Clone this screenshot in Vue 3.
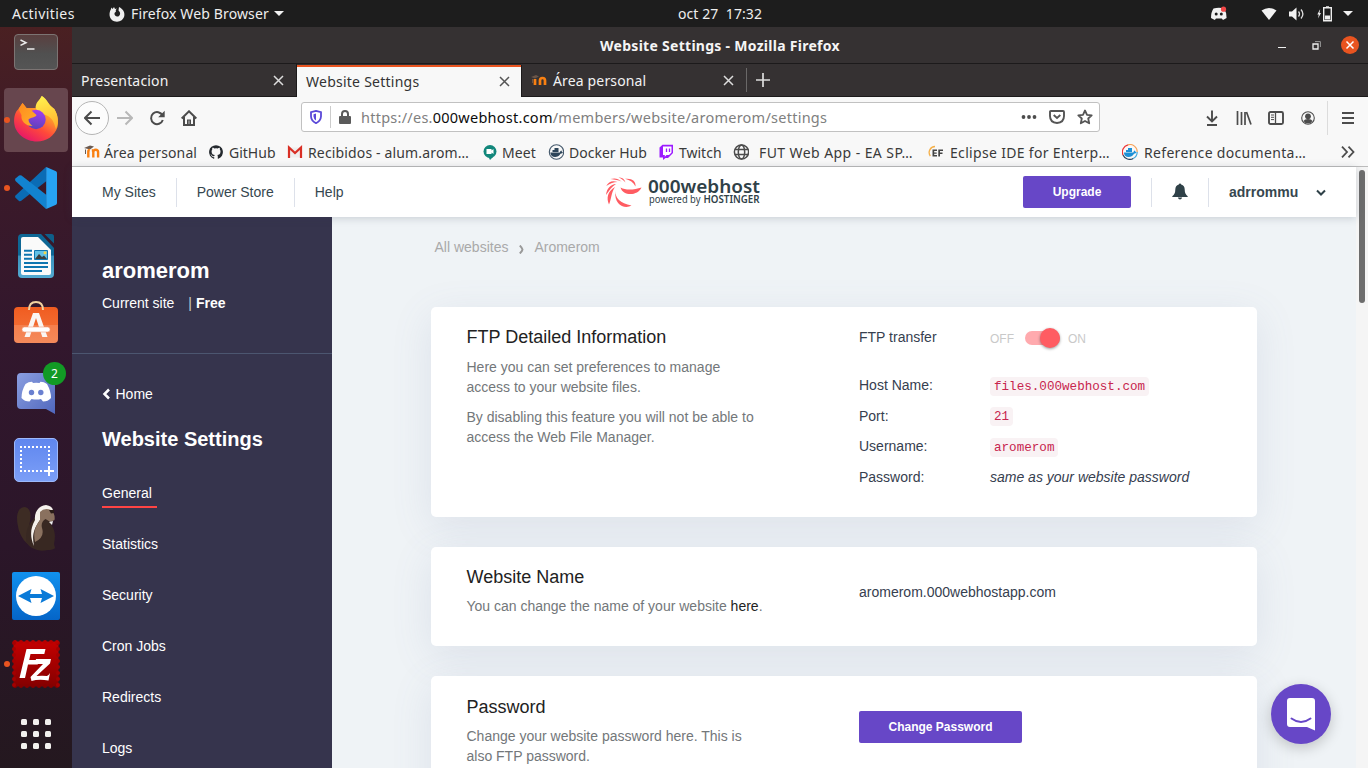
<script setup>
const bookmarks = [
  { id: 'moodle', label: 'Área personal', w: 124, gap: 4, ls: 0.13 },
  { id: 'github', label: 'GitHub', w: 79, gap: 5, ls: 0 },
  { id: 'gmail', label: 'Recibidos - alum.arom…', w: 195, gap: 5, ls: 0.15 },
  { id: 'meet', label: 'Meet', w: 66, gap: 4, ls: 0.1 },
  { id: 'docker', label: 'Docker Hub', w: 110, gap: 5, ls: 0 },
  { id: 'twitch', label: 'Twitch', w: 75, gap: 5, ls: 0 },
  { id: 'globe', label: 'FUT Web App - EA SP…', w: 195, gap: 10, ls: 0.42 },
  { id: 'ef', label: 'Eclipse IDE for Enterp…', w: 194, gap: 6, ls: 0.32 },
  { id: 'dockerc', label: 'Reference documenta…', w: 200, gap: 6, ls: 0.32 },
]
const menu = ['General', 'Statistics', 'Security', 'Cron Jobs', 'Redirects', 'Logs']
const dots = [0, 12, 24]
const stamp = [3, 9, 15, 21, 27, 33, 39, 45]
</script>

<template>
  <div class="desktop">
    <header class="topbar">
      <span class="activities">Activities</span>
      <svg class="tb-fox" width="16" height="16" viewBox="0 0 16 16"><path d="M5 1l1 2 2-.4C6.800 3.500 6.500 4.500 7 5.500L5.500 7C5 10 8 11.500 10 10c2-2 1-4-.5-5.500L10 1c4 2 6 5 5.300 9C14.500 13.500 11.500 15.700 8 15.700 4 15.700 1 13 .6 9.500.3 7 1 5 1.700 3.700L2.500 1.500 3.600 3z" fill="#eee" /></svg>
      <span class="app-name">Firefox Web Browser</span>
      <i class="caret"></i>
      <span class="clock">oct 27&nbsp; 17:32</span>
      <div class="tray">
        <svg class="t-disc" width="18" height="15" viewBox="0 0 18 15"><path d="M3.500 2.500Q9 .8 14 2.500 17 7 16.600 12L13 14l-1.200-1.500H6L4.800 14 1 12Q1 6 3.500 2.500z" fill="#f2f2f2" /><circle cx="6.200" cy="8" r="1.500" fill="#1d1d1d" /><circle cx="11.300" cy="8" r="1.500" fill="#1d1d1d" /><circle cx="13.500" cy="3.200" r="2.600" fill="#f04747" /></svg>
        <svg class="t-wifi" width="16" height="14" viewBox="0 0 16 14"><path d="M.5 3.500Q8-1.500 15.500 3.500L8 13z" fill="#f2f2f2" /></svg>
        <svg class="t-vol" width="16" height="14" viewBox="0 0 16 14"><path d="M0 4.500h3L7.500.5v13L3 9.500H0z" fill="#f2f2f2" /><path d="M9.500 4.500q2 2.500 0 5M12 2.500q3.800 4.500 0 9" fill="none" stroke="#ddd" stroke-width="1.300" /></svg>
        <svg class="t-bat" width="15" height="16" viewBox="0 0 15 16"><path d="M3.200 3L.3 8.500h1.500L1 12.500 4 7H2.500z" fill="#eee" /><path d="M6.700 1.700h7.600v13H6.700z" fill="none" stroke="#eee" stroke-width="1.400" /><path d="M9 .2h3v1.500H9zM8 9.500h5v4H8z" fill="#eee" /></svg>
        <i class="caret"></i>
      </div>
    </header>

    <div class="workspace">
      <aside class="dock">
        <div class="cell">
          <svg width="48" height="48" viewBox="0 0 48 48"><defs><linearGradient id="gt" x1="0" y1="0" x2="0" y2="1"><stop offset="0" stop-color="#5a3f3f" /><stop offset=".55" stop-color="#505050" /><stop offset="1" stop-color="#555" /></linearGradient></defs><rect x="2.500" y="6.500" width="43" height="35" rx="3.500" fill="url(#gt)" stroke="#7c7473" /><path d="M8.500 12l5.500 2.700-5.500 2.700" stroke="#eee" stroke-width="1.500" fill="none" /><path d="M15 21h7.500" stroke="#eee" stroke-width="1.500" /></svg>
        </div>
        <div class="cell">
          <i class="run-dot"></i>
          <div class="lit">
            <svg width="48" height="48" viewBox="0 0 48 48">
              <defs>
                <linearGradient id="f1" x1=".85" y1="0" x2=".25" y2="1"><stop offset="0" stop-color="#fff44f" /><stop offset=".35" stop-color="#ffa12a" /><stop offset=".65" stop-color="#ff4a3a" /><stop offset="1" stop-color="#e4126d" /></linearGradient>
                <linearGradient id="f2" x1=".6" y1="0" x2=".4" y2="1"><stop offset="0" stop-color="#a23cf0" /><stop offset="1" stop-color="#5a43b8" /></linearGradient>
                <linearGradient id="f3" x1="0" y1="0" x2="1" y2="1"><stop offset="0" stop-color="#ff8a1e" /><stop offset="1" stop-color="#ffb02a" /></linearGradient>
                <linearGradient id="f4" x1=".4" y1="0" x2=".6" y2="1"><stop offset="0" stop-color="#fff14d" /><stop offset="1" stop-color="#ffb02e" /></linearGradient>
              </defs>
              <path d="M6.500 13l4-6 4 5h9l6-12c6 4 7 9 10 11l3 2c3 7 4.500 12 3 18-3 9-11 14.500-20.500 14.500C13 45.500 3 37 2.200 27 1.800 21 3 16 6.500 13z" fill="url(#f1)" />
              <path d="M30 0c6 4 6 8 10 11 6 5 7.500 14 4 22-2-5-2-9-8-13-8-3-14-6-12-11 1-4 4-5 6-9z" fill="url(#f4)" />
              <circle cx="24" cy="23.500" r="9.700" fill="url(#f2)" />
              <path d="M6.500 13l4-6 4 5c3 0 5 1 6 3.500l4 3.500c-1 3-6 2-8 4.500 0 3 2 5 4 6.500-7 0-12-5-11-11z" fill="url(#f3)" />
            </svg>
          </div>
        </div>
        <div class="cell">
          <i class="run-dot"></i>
          <svg width="48" height="48" viewBox="0 0 48 48"><path d="M34 3L3.500 31.500q-1 1.300 0 2.300L7 37q1.200.6 2.300-.2L34.500 17z" fill="#0b6cb5" /><path d="M34 45L3.500 17q-1-1.200 0-2.400L7 11.500q1.300-.7 2.500 0L34.500 31z" fill="#1283d0" /><path d="M34.200 3L44 7.300q1 .6 1 2v29.500q0 1.300-1 1.900L34.200 45z" fill="#27a3f3" /></svg>
        </div>
        <div class="cell">
          <svg width="48" height="48" viewBox="0 0 48 48"><defs><linearGradient id="w1" x1="0" y1="0" x2="0" y2="1"><stop offset=".48" stop-color="#0e6795" /><stop offset=".5" stop-color="#3a92bd" /><stop offset="1" stop-color="#53aad1" /></linearGradient></defs><path d="M10 2h19l13 14v26q0 4-4 4H10q-4 0-4-4V6q0-4 4-4z" fill="url(#w1)" /><path d="M32.500 2h7q2.500 0 2.500 2.500v7z" fill="#0e5f8a" /><path d="M11 5h15l13 13v23q0 2-2 2H11q-2 0-2-2V7q0-2 2-2z" fill="#fafafa" /><path d="M12 18.800h8M12 22.800h8M12 26.800h8M12 31h24M12 35h24M12 39h18" stroke="#0f76b0" stroke-width="2" /><path d="M22.500 18.500h13v9h-13z" fill="#62c1e6" stroke="#0f76b0" stroke-width="1" /><path d="M23 27l4-5 3 3 2-1.500 3 3.500z" fill="#3b3f3f" /><circle cx="33" cy="20.700" r="1.500" fill="#f2d64b" /></svg>
        </div>
        <div class="cell">
          <svg width="48" height="48" viewBox="0 0 48 48"><defs><linearGradient id="s1" x1="0" y1="0" x2="0" y2="1"><stop offset="0" stop-color="#f05c20" /><stop offset=".5" stop-color="#f26a30" /><stop offset=".51" stop-color="#f57f4c" /><stop offset="1" stop-color="#f48a5b" /></linearGradient></defs><rect x="2" y="7" width="44" height="36" rx="4" fill="url(#s1)" /><path d="M17 10Q17 2 24 2t7 8" fill="none" stroke="#f2d2a0" stroke-width="2" /><path d="M21 13h6l8.500 24h-5.200L24 18l-6.300 19h-5.200z" fill="#faf5f2" /><rect x="10" y="27" width="28" height="5" rx="2.500" fill="#fff" stroke="#f0a07c" stroke-width=".6" /></svg>
        </div>
        <div class="cell">
          <svg width="48" height="48" viewBox="0 0 48 48"><defs><linearGradient id="d1" x1="0" y1="0" x2="1" y2="1"><stop offset="0" stop-color="#8a9ee0" /><stop offset="1" stop-color="#5067bd" /></linearGradient></defs><path d="M9 5h30q4 0 4 4v37l-9-5H9q-4 0-4-4V9q0-4 4-4z" fill="url(#d1)" /><path d="M13.500 16q3-2.300 6.500-2.300l1 1.300q3.500-.4 6.500 0l1-1.300q3.500 0 6.500 2.300 4 7 4 14-3 3.500-8 3.500L29 31q-4.500 1-9.500 0L17.500 33.500q-5 0-8-3.500 0-7.500 4-14z" fill="#fff" /><circle cx="19.500" cy="24.500" r="2.700" fill="#6a80d0" /><circle cx="28.800" cy="24.500" r="2.700" fill="#6a80d0" /></svg>
          <span class="count">2</span>
        </div>
        <div class="cell">
          <svg width="48" height="48" viewBox="0 0 48 48"><defs><linearGradient id="c1" x1="0" y1="0" x2="0" y2="1"><stop offset="0" stop-color="#5f86ef" /><stop offset="1" stop-color="#7c9ff7" /></linearGradient></defs><rect x="2.500" y="2.500" width="43" height="43" rx="4.500" fill="url(#c1)" stroke="#9db9fb" /><path d="M8 11h30M8 35h24M9 10v26M37 10v18" stroke="#fff" stroke-width="2" stroke-dasharray="2 2" fill="none" /><path d="M37 30v10M32 35h10" stroke="#fff" stroke-width="2" /></svg>
        </div>
        <div class="cell">
          <svg width="48" height="48" viewBox="0 0 48 48"><path d="M17 41C9 36 5 24 5 13q1-10 8-10 5 1 5.500 8c0 7-2 10-1 17z" fill="#3d2c24" /><path d="M28 9l12-2c0 7-3 11 0 15 4 6 3 13 2 18l1 4q-2 2-7 2-15 3-22-8c0-12 1-18 14-29z" fill="#382822" /><path d="M22 42c-4-9-4-17 1-26-1-8 4-14.500 11-15q7 1 7 6l-6 0q-6 1-7 9c-7 10-8 16-6 26z" fill="#f5f1ec" /><path d="M28 8q4-4.500 11-2 4.500 4 3.500 10l-4 2-5-3q-5 3-3.500 9 3 9-7 14c-2-10 0-15 5-22z" fill="#8a715f" /><path d="M37 6h5v3l-3 .5z" fill="#2a1d18" /><path d="M37 18l4-1-1 4z" fill="#eee" /></svg>
        </div>
        <div class="cell">
          <svg width="48" height="48" viewBox="0 0 48 48"><defs><linearGradient id="v1" x1="0" y1="0" x2="0" y2="1"><stop offset="0" stop-color="#1191ee" /><stop offset="1" stop-color="#0565c8" /></linearGradient></defs><rect width="48" height="48" rx="2" fill="url(#v1)" /><circle cx="24" cy="24" r="20" fill="#fff" /><path d="M6 24l13.500-7-1.500 5h12l-1.500-5L42 24l-13.500 7 1.500-5H18l1.500 5z" fill="#0a7ad8" /></svg>
        </div>
        <div class="cell">
          <i class="run-dot"></i>
          <svg width="48" height="48" viewBox="0 0 48 48"><defs><linearGradient id="z1" x1="0" y1="0" x2="0" y2="1"><stop offset="0" stop-color="#c40000" /><stop offset="1" stop-color="#850000" /></linearGradient></defs><rect x="1.500" y="1.500" width="45" height="45" fill="url(#z1)" /><template v-for="p in stamp" :key="p"><circle :cx="p" cy="2" r="2" fill="#b90000" /><circle :cx="p" cy="46" r="2" fill="#850000" /><circle cx="2" :cy="p" r="2" fill="#a50000" /><circle cx="46" :cy="p" r="2" fill="#a50000" /></template><path d="M14.500 9h19l-1.200 5H18.500l-1.300 6h9.500l-1 4.500H16L13 38H7.500z" fill="#fff" /><path d="M24 19h15l-1 4.500L24.500 36q6-.5 10.500 0 2-1 3-3l-1.500 7.500q-10-1.500-17 .5l-1-4L31 24h-8z" fill="#fff" /></svg>
        </div>
        <div class="cell apps">
          <svg width="30" height="30" viewBox="0 0 30 30"><template v-for="y in dots" :key="y"><rect v-for="x in dots" :key="x" :x="x" :y="y" width="6" height="6" rx="1.500" fill="#f2f0ee" /></template></svg>
        </div>
      </aside>

      <section class="window">
        <div class="titlebar">
          <span class="title">Website Settings - Mozilla Firefox</span>
          <div class="wbtns">
            <i class="min"></i>
            <svg width="9" height="9" viewBox="0 0 9 9"><path d="M1 3h5v5H1z" fill="none" stroke="#eee" stroke-width="1.300" /><path d="M3 .6h5.400V6" fill="none" stroke="#999" stroke-width="1" /></svg>
            <svg width="18" height="18" viewBox="0 0 18 18"><circle cx="9" cy="9" r="9" fill="#e95420" /><path d="M5.500 5.500l7 7M12.500 5.500l-7 7" stroke="#fff" stroke-width="1.500" /></svg>
          </div>
        </div>

        <div class="tabs">
          <div class="tab"><span class="t1">Presentacion</span><svg class="x" width="11" height="11" viewBox="0 0 11 11"><path d="M1 1l9 9M10 1l-9 9" stroke="#ddd" stroke-width="1.500" /></svg></div>
          <div class="tab active"><span class="t2">Website Settings</span><svg class="x" width="11" height="11" viewBox="0 0 11 11"><path d="M1 1l9 9M10 1l-9 9" stroke="#555" stroke-width="1.500" /></svg></div>
          <div class="tab third"><svg width="16" height="12" viewBox="0 0 16 12"><path d="M0 3l5-2 3 1.500-4 2zM1 5h1v4H1z" fill="#6b5548" /><path d="M4 11V5M9 11V6.500q0-2.500 2.500-2.500T14 6.500V11" fill="none" stroke="#f98012" stroke-width="2.700" /></svg><span class="t3">Área personal</span><svg class="x" width="11" height="11" viewBox="0 0 11 11"><path d="M1 1l9 9M10 1l-9 9" stroke="#ddd" stroke-width="1.500" /></svg></div>
          <svg class="plus" width="14" height="14" viewBox="0 0 14 14"><path d="M7 0v14M0 7h14" stroke="#ddd" stroke-width="1.700" /></svg>
        </div>

        <div class="navbar">
          <span class="back"><svg width="16" height="16" viewBox="0 0 16 16"><path d="M16 8H1.500M7.500 1.500L1 8l6.500 6.500" fill="none" stroke="#4c4c4c" stroke-width="2" /></svg></span>
          <svg class="fwd" width="16" height="16" viewBox="0 0 16 16"><path d="M0 8h14.500M8.500 1.500L15 8l-6.500 6.500" fill="none" stroke="#b8b8b8" stroke-width="2" /></svg>
          <svg class="reload" width="16" height="16" viewBox="0 0 16 16"><path d="M13.500 5.500A6 6 0 1 0 13.800 10" fill="none" stroke="#4c4c4c" stroke-width="2" /><path d="M15.700.8v6.500H9.200z" fill="#4c4c4c" /></svg>
          <svg class="home" width="16" height="16" viewBox="0 0 16 16"><path d="M.7 8.500L8 1.300l7.300 7.200M3 7v8h10V7" fill="none" stroke="#4c4c4c" stroke-width="2" /><path d="M6 9.500h4V15H6z" fill="#4c4c4c" /><path d="M8 10.500v3.500" stroke="#ddd" stroke-width=".8" /></svg>
          <div class="url">
            <svg width="12" height="14" viewBox="0 0 12 14"><path d="M6 .9L11 2.200V6.500Q10.700 11 6 13.200 1.300 11 1 6.500V2.200z" fill="none" stroke="#5a48d8" stroke-width="1.800" /><path d="M6 3.500v7Q3.500 9 3.500 6.300V4.200z" fill="#5a48d8" /></svg>
            <i class="usep"></i>
            <svg width="12" height="14" viewBox="0 0 12 14"><path d="M3 7V4q0-3 3-3t3 3v3" fill="none" stroke="#5a5a5a" stroke-width="2" /><rect y="6" width="12" height="8" rx="1" fill="#5a5a5a" /></svg>
            <span class="address">https://es.<b>000webhost.com</b>/members/website/aromerom/settings</span>
            <div class="uicons">
              <svg width="16" height="4" viewBox="0 0 16 4"><circle cx="2.500" cy="2" r="1.900" fill="#4c4c4c" /><circle cx="8" cy="2" r="1.900" fill="#4c4c4c" /><circle cx="13.500" cy="2" r="1.900" fill="#4c4c4c" /></svg>
              <svg width="16" height="14" viewBox="0 0 16 14"><path d="M1.900 1h12.200q.9 0 .9.900V6q0 6.500-7 7Q1 12.500 1 6V1.900Q1 1 1.900 1z" fill="none" stroke="#555" stroke-width="1.900" /><path d="M4.700 5L8 8l3.300-3" fill="none" stroke="#555" stroke-width="1.900" /></svg>
              <svg width="16" height="16" viewBox="0 0 16 16"><path d="M8 1.500l2 4.300 4.700.5-3.500 3.200 1 4.800L8 12l-4.200 2.300 1-4.800L1.300 6.300 6 5.800z" fill="none" stroke="#555" stroke-width="1.800" stroke-linejoin="round" /></svg>
            </div>
          </div>
          <div class="nright">
            <svg width="14" height="16" viewBox="0 0 14 16"><path d="M7 .5V11M2 6.500l5 5 5-5M2 15h10" fill="none" stroke="#4c4c4c" stroke-width="1.900" /></svg>
            <svg width="16" height="14" viewBox="0 0 16 14"><path d="M1.500 0v14M5.500 1v13M9 1v13M10.500 1l4.500 12.500" fill="none" stroke="#4c4c4c" stroke-width="1.700" /></svg>
            <svg width="16" height="14" viewBox="0 0 16 14"><rect x="1" y="1" width="14" height="12" rx="1.500" fill="none" stroke="#4c4c4c" stroke-width="1.900" /><path d="M7.500 1v12" stroke="#4c4c4c" stroke-width="1.300" /><path d="M3 4h3M3 6.300h3M3 8.600h3" stroke="#4c4c4c" stroke-width="1" /></svg>
            <svg width="14" height="14" viewBox="0 0 14 14"><circle cx="7" cy="7" r="6.300" fill="none" stroke="#4c4c4c" stroke-width="1.100" /><circle cx="7" cy="5.300" r="2.900" fill="#4c4c4c" /><path d="M2.500 10q1-2 4.500-2t4.500 2q-1.500 2.500-4.500 2.500T2.500 10z" fill="#4c4c4c" /></svg>
            <i class="nsep"></i>
            <svg width="12" height="12" viewBox="0 0 12 12"><path d="M0 1h12M0 6h12M0 11h12" stroke="#4c4c4c" stroke-width="1.900" /></svg>
          </div>
        </div>

        <div class="bookmarks">
          <div v-for="b in bookmarks" :key="b.id" class="bm" :style="{ width: b.w + 'px', gap: b.gap + 'px', letterSpacing: b.ls + 'px' }">
            <svg width="16" height="16" viewBox="0 0 16 16">
              <template v-if="b.id === 'moodle'"><path d="M0 4l6-2.500 4 1-4 3zM1 5.500h1v4.500H1z" fill="#6b5a50" /><path d="M4.300 13.500v-6q0-1.500 1.500-1.500M9.300 13.500V8q0-1.800-1.500-1.800M9.300 13.500V8q0-2.200 2.400-2.200T14.100 8v5.500" fill="none" stroke="#f98012" stroke-width="2.400" /></template>
              <path v-else-if="b.id === 'github'" d="M8 1.200a7 7 0 0 0-2.300 13.600c.4.100.5-.2.500-.4v-1.300c-2 .4-2.500-1-2.500-1-.4-.8-.8-1.100-.8-1.100-.7-.4 0-.4 0-.4.800 0 1.200.8 1.200.8.700 1.200 1.800.8 2.200.6.100-.5.300-.8.500-1-1.600-.2-3.200-.8-3.200-3.500 0-.8.300-1.400.7-1.900 0-.2-.3-.9.100-1.900 0 0 .6-.2 1.900.7a6.600 6.600 0 0 1 3.500 0c1.300-.9 1.900-.7 1.900-.7.400 1 .1 1.700.1 1.900.4.500.7 1.100.7 1.900 0 2.700-1.600 3.300-3.200 3.500.3.200.5.700.5 1.300v2.100c0 .2.100.4.500.4A7 7 0 0 0 8 1.200z" fill="#24292e" />
              <template v-else-if="b.id === 'gmail'"><path d="M2 3.500h12v10H2z" fill="#eee" /><path d="M2 14V3.500L8 9l6-5.500V14" fill="none" stroke="#d92f25" stroke-width="2.200" /></template>
              <template v-else-if="b.id === 'meet'"><circle cx="8" cy="7.500" r="6.500" fill="#12877b" /><path d="M6.500 13H11l-3 3z" fill="#12877b" /><path d="M4.500 5h5v1.500L11.500 5v5L9.500 8.500V10h-5z" fill="#fff" /></template>
              <template v-else-if="b.id === 'docker'"><circle cx="8.500" cy="8" r="7.200" fill="#f8f8f8" stroke="#44586b" stroke-width="1.100" /><path d="M2.300 8.500h9.500q.5-2 1.700-2 0 1.500 1.500 1.500-.5 1.500-2.500 1.700Q10.500 13 7 13 3 13 2.300 8.500zM4.500 6h6v2h-6zM6.500 4h4v2h-4z" fill="#2d4559" /></template>
              <template v-else-if="b.id === 'dockerc'"><path d="M1 11A7.500 7.500 0 0 1 6 .8" fill="none" stroke="#e33" stroke-width="1.200" /><path d="M6 .8A7.300 7.300 0 0 1 15.200 8" fill="none" stroke="#f6a35a" stroke-width="1.200" /><path d="M15.200 8a7.300 7.300 0 0 1-4 6.500" fill="none" stroke="#4ad" stroke-width="1.200" /><path d="M11.200 14.500A7.300 7.300 0 0 1 1 11" fill="none" stroke="#2b4560" stroke-width="1.200" /><path d="M1.800 8.500h9.500q.5-2 1.700-2 0 1.500 1.500 1.500-.5 1.500-2.500 1.700Q10 13 6.500 13 2.500 13 1.800 8.500zM4 6h6v2H4zM6 4h4v2H6z" fill="#1b8fd6" /></template>
              <template v-else-if="b.id === 'twitch'"><path d="M1.500 3.500L4.500.800H15V9l-5 5H7.500L5 16v-2.500H1.500z" fill="#9c1cff" /><path d="M5 2.500h8.500v6L11 11H8.500l-1.700 1.700V11H5z" fill="#fff" /><path d="M8.500 4.500v3.500M11.500 4.500v3.500" stroke="#9c1cff" stroke-width="1.300" /></template>
              <g v-else-if="b.id === 'globe'" fill="none" stroke="#4c4c4c" stroke-width="1.500"><circle cx="8.500" cy="8" r="7.100" /><ellipse cx="8.500" cy="8" rx="3.200" ry="7" /><path d="M2 5.500h13M2 10.500h13" /></g>
              <template v-else><path d="M2.300 12A6 6 0 0 1 7 2.500" fill="none" stroke="#f5b04a" stroke-width="1.300" /><path d="M4.500 5.500H9V7H6.200v1.400h2.500v1.400H6.200v1.300H9v1.500H4.500zM10.300 5.500H15V7h-3v1.500h2.500V10H12v2.600h-1.700z" fill="#444" /></template>
            </svg>
            <span>{{ b.label }}</span>
          </div>
          <svg class="more" width="14" height="12" viewBox="0 0 14 12"><path d="M1 .7L6 6l-5 5.300M7.500.7l5 5.300-5 5.300" fill="none" stroke="#4c4c4c" stroke-width="1.800" /></svg>
        </div>

        <div class="page">
          <div class="site">
            <header class="sitehead">
              <nav><a>My Sites</a><a>Power Store</a><a>Help</a></nav>
              <svg class="logo" width="156" height="46" viewBox="0 -7 156 46">
                <g fill="#ff5c62">
                  <path d="M9.500 14C9 21 14 26 25.500 28.500 19 32.500 7.500 28 9.500 14z" />
                  <path d="M9 10C1.500 14.500 .2 21 3 27.500 5.500 22 5 16 9 10z" />
                  <path d="M10 7C4.500 7.500 .8 11.500 0 18 3.500 13.500 5.500 9.500 10 7z" />
                  <path d="M11.500 5C6.500 3 2.500 4.500 .3 9 4.500 6.300 7.500 5.300 11.500 5z" />
                  <path d="M15.500 4.500C12 1.200 8.500.8 4.500 2 9.500 2.500 12 3 15.500 4.500z" />
                  <path d="M19.500 5.500C18.500 2 16 .3 12.500 .2 16 2 17.500 3 19.500 5.500z" />
                  <path d="M19 1.800C26 1 30 4 29.500 9.500 27.500 5.500 24 3 19 1.800z" />
                  <path d="M14.500 10.500C17 19.500 32 19 35.500 10.500 29 12.500 20.500 14 14.500 10.500z" />
                </g>
                <text x="42" y="16" class="lg1" textLength="112" lengthAdjust="spacingAndGlyphs">000webhost</text>
                <text x="43" y="26" class="lg2" textLength="51.500" lengthAdjust="spacingAndGlyphs">powered by</text>
                <text x="97.500" y="26" class="lg3" textLength="56" lengthAdjust="spacingAndGlyphs">HOSTINGER</text>
              </svg>
              <div class="account">
                <button class="btn up">Upgrade</button>
                <i class="sep"></i>
                <svg class="bell" width="16" height="17" viewBox="0 0 16 17"><path d="M8 .5q1 0 1.200 1 3.500 1 3.500 5 0 4.500 3 6.700v.8H.3v-.8q3-2.200 3-6.700 0-4 3.500-5Q7 .5 8 .5zM5.800 14.500h4.400Q9.500 16.500 8 16.500t-2.200-2z" fill="#2f4148" /></svg>
                <i class="sep"></i>
                <strong>adrrommu</strong>
                <svg width="10" height="8" viewBox="0 0 10 8"><path d="M1 2.500l4 4 4-4" fill="none" stroke="#2f4148" stroke-width="2" /></svg>
              </div>
            </header>
            <div class="body">
              <aside class="side">
                <div class="who">
                  <h2>aromerom</h2>
                  <p>Current site<span class="plan"><i>|</i> <b>Free</b></span></p>
                </div>
                <div class="homelink"><svg width="8" height="12" viewBox="0 0 8 12"><path d="M7 1.500L2.500 6 7 10.500" fill="none" stroke="#fff" stroke-width="2.500" /></svg>Home</div>
                <h3>Website Settings</h3>
                <ul><li v-for="(m, i) in menu" :key="m"><a :class="{ on: i === 0 }">{{ m }}</a></li></ul>
              </aside>
              <main class="main">
                <div class="crumbs">All websites<svg width="5" height="9" viewBox="0 0 5 9"><path d="M.8.5Q3.300 3 3.500 4.500 3.300 6 .8 8.500" fill="none" stroke="#999" stroke-width="1.900" /></svg>Aromerom</div>
                <section class="card c1">
                  <div class="desc">
                    <h4>FTP Detailed Information</h4>
                    <p>Here you can set preferences to manage<br>access to your website files.</p>
                    <p>By disabling this feature you will not be able to<br>access the Web File Manager.</p>
                  </div>
                  <div class="vals">
                    <div class="row first"><span>FTP transfer</span><div class="switch">OFF<i class="track"><i class="knob"></i></i>ON</div></div>
                    <div class="row"><span>Host Name:</span><code>files.000webhost.com</code></div>
                    <div class="row"><span>Port:</span><code>21</code></div>
                    <div class="row"><span>Username:</span><code>aromerom</code></div>
                    <div class="row"><span>Password:</span><em>same as your website password</em></div>
                  </div>
                </section>
                <section class="card c2">
                  <div class="desc">
                    <h4>Website Name</h4>
                    <p>You can change the name of your website <a>here</a>.</p>
                  </div>
                  <div class="vals">aromerom.000webhostapp.com</div>
                </section>
                <section class="card c3">
                  <div class="desc">
                    <h4>Password</h4>
                    <p>Change your website password here. This is<br>also FTP password.</p>
                  </div>
                  <div class="vals"><button class="btn pw">Change Password</button></div>
                </section>
                <div class="chat"><svg width="28" height="33" viewBox="0 0 28 33"><path d="M3 0h22q3 0 3 3v29.500L20 29H3q-3 0-3-3V3q0-3 3-3z" fill="#fff" /><path d="M4.500 20.500q9.500 7 19 0" fill="none" stroke="#6747c7" stroke-width="2" stroke-linecap="round" /></svg></div>
              </main>
            </div>
          </div>
          <div class="scroll"><i></i></div>
        </div>
      </section>
    </div>
  </div>
</template>

<style>
body { margin: 0; overflow: hidden; }
</style>

<style scoped>
* { box-sizing: border-box; }
svg { display: block; flex: none; }
i { font-style: normal; }
.desktop { width: 1368px; height: 768px; overflow: hidden; display: flex; flex-direction: column; font-family: "Noto Sans", "Open Sans", sans-serif; font-size: 14px; }
.topbar { height: 27px; flex: none; background: #1d1d1d; color: #eee; display: flex; align-items: center; padding-left: 12px; white-space: nowrap; }
.activities { width: 97px; letter-spacing: .45px; }
.app-name { margin-left: 6px; width: 139px; letter-spacing: .13px; }
.caret { width: 0; height: 0; margin-left: 4px; border: 5px solid transparent; border-top-color: #f2f2f2; border-bottom: 0; }
.clock { margin-left: 394px; letter-spacing: .08px; margin-top: -1px; }
.tray { margin-left: auto; display: flex; align-items: center; padding-right: 15px; }
.t-wifi { margin-left: 33px; }
.t-vol { margin-left: 12px; }
.t-bat { margin-left: 12px; }
.tray .caret { margin-left: 11px; }
.workspace { flex: 1; min-height: 0; display: flex; }
.dock { width: 72px; flex: none; background: linear-gradient(#4a2022, #3c1a29 18%, #32172d 42%, #2b1629 70%, #24181f); display: flex; flex-direction: column; overflow: hidden; }
.cell { height: 68px; flex: none; position: relative; display: flex; align-items: center; justify-content: center; }
.cell:first-child { margin-top: -9px; }
.apps { padding-top: 4px; }
.lit { width: 64px; height: 64px; border-radius: 4px; background: #67464e; display: flex; align-items: center; justify-content: center; }
.run-dot { position: absolute; left: 4px; top: 31px; width: 6px; height: 6px; border-radius: 3px; background: #e95420; }
.count { position: absolute; left: 43px; top: 4px; width: 23px; height: 23px; border-radius: 12px; background: #129a25; color: #fff; font-size: 12px; line-height: 23px; text-align: center; }
.window { flex: 1; min-width: 0; display: flex; flex-direction: column; }
.titlebar { height: 37px; flex: none; background: #353132; border-bottom: 1px solid #1c1a1b; display: flex; align-items: center; position: relative; }
.title { flex: 1; text-align: center; color: #f5f5f5; font-weight: 700; font-size: 14px; letter-spacing: .28px; padding-top: 1px; }
.wbtns { position: absolute; right: 9px; top: 9px; display: flex; align-items: center; }
.min { width: 8px; height: 1px; background: #eee; margin: 5px 26px 0 0; }
.wbtns svg:last-child { margin-left: 20px; }
.tabs { height: 33px; flex: none; background: #353132; border-bottom: 1px solid #1c1a1b; display: flex; align-items: center; color: #f2f2f2; }
.tab { width: 225px; height: 33px; display: flex; align-items: center; padding: 0 12px 0 9px; border-right: 1px solid #1c1a1b; }
.tab .x { margin-left: auto; }
.tab.active { background: #f8f8f8; color: #333; height: 32px; align-self: flex-start; margin-top: 1px; box-shadow: inset 0 2px #e95420; padding-right: 11px; }
.tab.third { height: 24px; border-right: 1px solid #6a6868; padding-right: 12px; }
.t1 { letter-spacing: .17px; }
.t2 { letter-spacing: .25px; }
.t3 { margin-left: 6px; letter-spacing: .15px; }
.plus { margin-left: 9px; }
.navbar { height: 41px; flex: none; background: #f8f8f8; display: flex; align-items: center; padding-left: 3px; }
.back { width: 34px; height: 34px; border: 1px solid #b5b5b5; border-radius: 17px; background: #fcfcfc; display: flex; align-items: center; justify-content: center; }
.fwd { margin-left: 8px; }
.reload, .home { margin-left: 16px; }
.url { margin-left: 104px; width: 799px; flex: none; height: 30px; margin-top: -1px; border: 1px solid #c1c1c1; border-radius: 3px; background: #fff; display: flex; align-items: center; padding: 0 6px 0 8px; }
.usep { width: 1px; height: 22px; background: #ccc; margin: 0 8px; }
.address { margin-left: 10px; color: #808080; white-space: nowrap; font-size: 14.500px; letter-spacing: .25px; }
.address b { font-weight: 400; color: #0c0c0c; }
.uicons { margin-left: auto; display: flex; align-items: center; gap: 12px; }
.nright { display: flex; align-items: center; margin-left: 105px; gap: 16.700px; }
.nsep { width: 1px; height: 34px; background: #dcdcdc; margin-left: -5px; }
.nright svg:last-child { margin-left: -2px; }
.bookmarks { height: 29px; flex: none; background: #f8f8f8; border-bottom: 1px solid #bcbcbc; display: flex; align-items: center; padding-left: 12px; color: #3a3a3a; }
.bm { display: flex; align-items: center; white-space: nowrap; flex: none; }
.bm svg { margin-top: -1px; }
.more { margin-left: 19px; }
.page { flex: 1; min-height: 0; display: flex; font-family: "Liberation Sans", Arial, sans-serif; }
.scroll { width: 12px; background: #f5f5f5; padding: 3px; }
.scroll i { display: block; width: 6px; height: 133px; border-radius: 3px; background: #6d6d6d; }
.site { flex: 1; min-width: 0; display: flex; flex-direction: column; }
.sitehead { height: 50px; flex: none; background: #fff; box-shadow: 0 1px 8px rgba(50, 65, 80, .22); position: relative; display: flex; align-items: center; color: #36474f; z-index: 2; }
nav { width: 534px; padding-left: 30px; display: flex; }
nav a { height: 29px; line-height: 28px; padding-right: 20px; margin-right: 20px; border-right: 1px solid #dde1ea; }
nav a:last-child { border: 0; }
.logo { margin-top: 2px; }
.lg1 { font: 600 18px "Noto Sans", sans-serif; fill: #2f4148; }
.lg2 { font: 10px "Noto Sans", sans-serif; fill: #2f4148; }
.lg3 { font: 600 10px "Noto Sans", sans-serif; fill: #2f4148; }
.account { margin-left: auto; display: flex; align-items: center; padding-right: 30px; color: #36474f; }
.account strong { margin: 0 18px 0 20px; width: 69px; }
.btn { border: 0; border-radius: 2px; background: #6747c7; color: #fff; font: 700 12px "Liberation Sans", Arial, sans-serif; height: 32px; padding: 0; }
.up { width: 108px; margin-right: 20px; }
.sep { width: 1px; height: 29px; background: #dde1ea; }
.bell { margin: -1px 20px 0; }
.body { flex: 1; min-height: 0; display: flex; }
.side { width: 260px; flex: none; background: #36344d; color: #fff; overflow: hidden; }
.who { height: 137px; padding: 41px 30px 0; border-bottom: 1px solid #4c5670; }
h2 { margin: 0; font-size: 22px; line-height: 25px; }
.who p { margin: 10px 0 0; line-height: 20px; }
.plan { margin-left: 14px; }
.plan i { color: #ccc; }
.homelink { display: flex; align-items: center; gap: 5.500px; margin: 30px 0 0 30px; height: 20px; }
h3 { margin: 23px 0 0 30px; font-size: 20px; line-height: 24px; }
ul { list-style: none; margin: 27px 0 0 30px; padding: 0; }
li { height: 51px; }
li a { display: inline-block; height: 30px; line-height: 31px; }
li a.on { padding-right: 5px; border-bottom: 2px solid #ff4444; }
.main { flex: 1; min-width: 0; background: #eff3f6; padding: 0 99px; position: relative; overflow: hidden; }
.crumbs { height: 60px; display: flex; align-items: center; color: #a9a9a9; padding-left: 3.500px; gap: 11px; }
.crumbs svg { margin-top: 4px; margin-right: -1px; }
.card { background: #fff; border-radius: 5px; box-shadow: 0 10px 40px rgba(100, 115, 160, .13); padding: 20px 35.500px 0; display: flex; color: #36404f; margin-bottom: 30px; }
.desc { width: 392.500px; color: #73777a; line-height: 20px; }
h4 { margin: 0; font-weight: 400; font-size: 18px; line-height: 20px; color: #222; }
.desc p { margin: 10px 0 0; }
.desc a { color: #222; }
.c1 { height: 210px; margin-top: 30px; }
.c2 { height: 99px; }
.c2 p { margin-top: 9px; }
.c2 .vals { padding-top: 17px; }
.c3 { height: 210px; }
.c3 h4 { line-height: 22px; }
.c3 p { margin-top: 8px; }
.row { height: 30.600px; display: flex; align-items: center; }
.row > span { width: 131px; }
.first { height: 20px; margin-bottom: 23px; }
code { font: 12.600px "Liberation Mono", monospace; color: #c7254e; background: #f9f2f4; border-radius: 4px; padding: 1px 4px 0; margin-top: 2px; height: 19px; line-height: 18px; }
.switch { display: flex; align-items: center; font-size: 12px; color: #c9c9c9; padding-top: 3px; }
.track { width: 35px; height: 14px; border-radius: 7px; background: #ffaaae; margin: -2px 8px 0 11px; position: relative; }
.knob { position: absolute; right: 0; top: -3px; width: 20px; height: 20px; border-radius: 10px; background: #ff5c62; box-shadow: 0 1px 3px rgba(0, 0, 0, .4); }
.c3 .vals { padding-top: 15px; }
.pw { width: 163px; }
.chat { position: absolute; right: 25px; bottom: 24px; width: 60px; height: 60px; border-radius: 30px; background: #6747c7; box-shadow: 0 4px 14px rgba(0, 0, 0, .2); display: flex; justify-content: center; padding-top: 14px; }
</style>
